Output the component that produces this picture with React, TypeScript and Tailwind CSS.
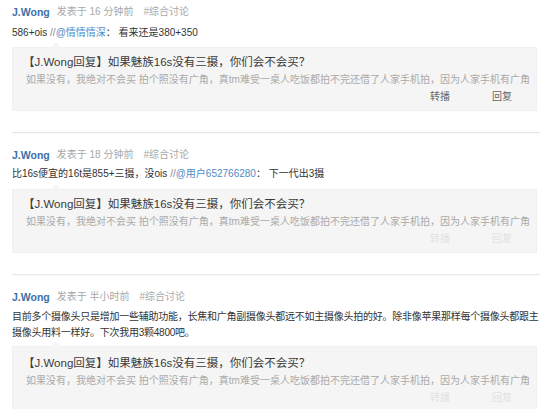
import React from "react";

const Header = ({ time }: { time: string }) => (
  <div className="flex items-center h-4 leading-4 text-[10px]">
    <span className="font-bold text-[#3c70a6] text-[10.5px]">J.Wong</span>
    <span className="ml-[7px] text-[#a8a8a8]">发表于 {time}</span>
    <span className="ml-[10px] text-[#a8a8a8]">#综合讨论</span>
  </div>
);

const Quote = ({ faded, pt }: { faded?: boolean; pt: string }) => (
  <div className={`relative mr-[3px] bg-[#f5f5f5] border border-[#f0f0f0] pl-[13px] pr-[24px] pb-[6px] ${pt}`}>
    <div className="absolute -top-[5px] left-[38px] w-0 h-0 border-l-[5px] border-r-[5px] border-b-[5px] border-l-transparent border-r-transparent border-b-[#f0f0f0]" />
    <div className="absolute -top-[4px] left-[39px] w-0 h-0 border-l-[4px] border-r-[4px] border-b-[4px] border-l-transparent border-r-transparent border-b-[#f5f5f5]" />
    <div className="h-4 leading-4 text-[11.5px] text-[#3a3a3a] -ml-[3px] whitespace-nowrap">【J.Wong回复】如果魅族16s没有三摄，你们会不会买？</div>
    <div className="mt-[3px] h-[14px] leading-[14px] text-[10px] text-[#aaa] whitespace-nowrap">
      如果没有，我绝对不会买 拍个照没有广角，真tm难受一桌人吃饭都拍不完还借了人家手机拍，因为人家手机有广角
    </div>
    <div className={`mt-[3px] h-[14px] leading-[14px] text-[10px] flex justify-end gap-[42px] ${faded ? "text-[#e2e2e2]" : "text-[#666]"}`}>
      <span>转播</span>
      <span>回复</span>
    </div>
  </div>
);

export default function App() {
  return (
    <div className="w-[550px] h-[409px] overflow-hidden bg-white pl-3 pr-[10px] font-['Liberation_Sans','Noto_Sans_CJK_SC',sans-serif]">
      {/* Post 1 */}
      <div className="pt-[4px]">
        <Header time="16 分钟前" />
        <div className="mt-[5px] h-4 leading-4 text-[10px] text-[#333] whitespace-nowrap">
          586+ois <span className="text-[#888]">//</span>
          <span className="text-[#4f8bc6]">@情情情深</span>： 看来还是380+350
        </div>
        <div className="mt-[6px]">
          <Quote pt="pt-[6px]" />
        </div>
        <div className="mt-[21px] h-px bg-[#e8e8e8] shadow-[0_1px_1px_rgba(0,0,0,0.03)]" />
      </div>

      {/* Post 2 */}
      <div className="pt-[14px]">
        <Header time="18 分钟前" />
        <div className="mt-[3px] h-4 leading-4 text-[10px] text-[#333] whitespace-nowrap">
          比16s便宜的16t是855+三摄，没ois <span className="text-[#888]">//</span>
          <span className="text-[#4f8bc6]">@用户652766280</span>： 下一代出3摄
        </div>
        <div className="mt-[7px]">
          <Quote faded pt="pt-[6px]" />
        </div>
        <div className="mt-[21px] h-px bg-[#e8e8e8] shadow-[0_1px_1px_rgba(0,0,0,0.03)]" />
      </div>

      {/* Post 3 */}
      <div className="pt-[14px]">
        <Header time="半小时前" />
        <div className="mt-[4px] leading-4 text-[10px] tracking-[-0.25px] text-[#333]">
          <div className="h-4 whitespace-nowrap">目前多个摄像头只是增加一些辅助功能，长焦和广角副摄像头都远不如主摄像头拍的好。除非像苹果那样每个摄像头都跟主</div>
          <div className="h-4 whitespace-nowrap">摄像头用料一样好。下次我用3颗4800吧。</div>
        </div>
        <div className="mt-[5px]">
          <Quote faded pt="pt-[8px]" />
        </div>
      </div>
    </div>
  );
}
